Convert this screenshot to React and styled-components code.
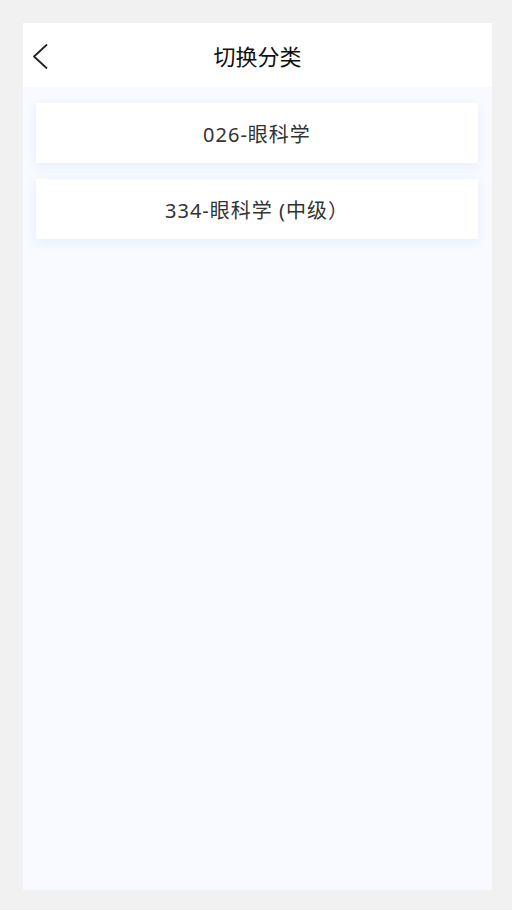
import React from 'react';
import styled, { createGlobalStyle } from 'styled-components';

const GlobalStyle = createGlobalStyle`
  html, body {
    margin: 0;
    padding: 0;
    background: #f1f1f1;
  }
  body {
    font-family: "Noto Sans", "Noto Sans CJK SC", sans-serif;
  }
`

const Frame = styled.div`
  padding: 23px 20px 20px 23px;
  height: 910px;
  box-sizing: border-box;
  display: flex;
`

const Screen = styled.div`
  width: 469px;
  height: 867px;
  display: flex;
  flex-direction: column;
  background: #f8faff;
`

const Header = styled.header`
  position: relative;
  height: 64px;
  flex-shrink: 0;
  display: flex;
  align-items: center;
  justify-content: center;
  background: #fff;
`

const BackButton = styled.button`
  position: absolute;
  left: 9px;
  top: 20px;
  width: 18px;
  height: 28px;
  padding: 0;
  border: none;
  background: none;
  display: flex;
`

const Title = styled.h1`
  margin: 0;
  font-size: 22px;
  font-weight: 400;
  color: #111;
  font-family: "Noto Sans CJK SC", sans-serif;
`

const List = styled.div`
  display: flex;
  flex-direction: column;
  gap: 16px;
  padding: 16px 14px 0 13px;
`

const Card = styled.div`
  height: 60px;
  display: flex;
  align-items: center;
  justify-content: center;
  background: #fff;
  box-shadow: 0 3px 10px rgba(210, 222, 245, 0.45);
  font-size: 20px;
  letter-spacing: 1px;
  color: #333;
  font-family: "Noto Sans", "Noto Sans CJK SC", sans-serif;
`

const categories = ['026-眼科学', '334-眼科学 (中级）'];

function App() {
  return (
    <>
      <GlobalStyle />
      <Frame>
        <Screen>
          <Header>
            <BackButton aria-label="返回">
              <svg width="18" height="28" viewBox="0 0 18 28" fill="none">
                <path d="M14.5 2 L2 13.5 L14.5 25" stroke="#222" strokeWidth="1.8" strokeLinecap="round" strokeLinejoin="round" />
              </svg>
            </BackButton>
            <Title>切换分类</Title>
          </Header>
          <List>
            {categories.map((c) => (
              <Card key={c}>{c}</Card>
            ))}
          </List>
        </Screen>
      </Frame>
    </>
  );
}

export default App;
